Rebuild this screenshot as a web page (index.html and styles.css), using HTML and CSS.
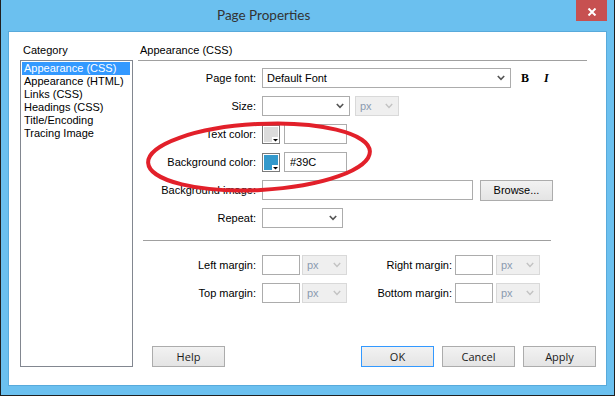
FILE: index.html
```html
<!DOCTYPE html>
<html lang="en">
<head>
  <meta charset="UTF-8">
  <meta name="viewport" content="width=device-width, initial-scale=1.0">
  <title>Page Properties</title>
  <link rel="stylesheet" href="styles.css">
</head>
<body>
  <div class="window">
    <div class="titlebar">
      <span class="title">Page Properties</span>
      <button class="close" type="button">
        <svg width="10" height="8" viewBox="0 0 10 8"><path d="M1.5 0.5 L8.5 7.5 M8.5 0.5 L1.5 7.5" stroke="#fff" stroke-width="2"/></svg>
      </button>
    </div>

    <div class="client">
      <div class="category">
        <div class="cat-label">Category</div>
        <ul class="cat-list">
          <li class="selected">Appearance (CSS)</li>
          <li>Appearance (HTML)</li>
          <li>Links (CSS)</li>
          <li>Headings (CSS)</li>
          <li>Title/Encoding</li>
          <li>Tracing Image</li>
        </ul>
      </div>

      <div class="panel">
        <div class="panel-title">Appearance (CSS)</div>

        <div class="form">
          <div class="row">
            <label class="lbl">Page font:</label>
            <div class="select font-select">
              <span>Default Font</span>
              <svg class="chev" width="8" height="6" viewBox="0 0 8 6"><path d="M0.8 1 L4 4.4 L7.2 1" fill="none" stroke="#555" stroke-width="1.6"/></svg>
            </div>
            <span class="style-btn bold">B</span>
            <span class="style-btn italic">I</span>
          </div>

          <div class="row">
            <label class="lbl">Size:</label>
            <div class="select size-select">
              <span></span>
              <svg class="chev" width="8" height="6" viewBox="0 0 8 6"><path d="M0.8 1 L4 4.4 L7.2 1" fill="none" stroke="#555" stroke-width="1.6"/></svg>
            </div>
            <div class="select unit disabled">
              <span>px</span>
              <svg class="chev" width="8" height="6" viewBox="0 0 8 6"><path d="M0.8 1 L4 4.4 L7.2 1" fill="none" stroke="#c2c2c2" stroke-width="1.4"/></svg>
            </div>
          </div>

          <div class="row">
            <label class="lbl">Text color:</label>
            <svg class="swatch" width="18" height="19" viewBox="0 0 18 19">
              <rect x="0.5" y="0.5" width="17" height="18" fill="#fff" stroke="#7a7a7a"/>
              <rect x="2" y="2" width="14" height="15" fill="#dcdcdc"/>
              <rect x="10" y="12" width="7" height="6" fill="#fff"/>
              <path d="M11 14 H16 L13.5 16.5 Z" fill="#000"/>
            </svg>
            <input class="field color-field" type="text" value="">
          </div>

          <div class="row">
            <label class="lbl">Background color:</label>
            <svg class="swatch" width="18" height="19" viewBox="0 0 18 19">
              <rect x="0.5" y="0.5" width="17" height="18" fill="#fff" stroke="#7a7a7a"/>
              <rect x="2" y="2" width="14" height="15" fill="#3399cc"/>
              <rect x="10" y="12" width="7" height="6" fill="#fff"/>
              <path d="M11 14 H16 L13.5 16.5 Z" fill="#000"/>
            </svg>
            <input class="field color-field" type="text" value="#39C">
          </div>

          <div class="row">
            <label class="lbl">Background image:</label>
            <input class="field image-field" type="text" value="">
            <button class="btn browse" type="button">Browse...</button>
          </div>

          <div class="row">
            <label class="lbl">Repeat:</label>
            <div class="select repeat-select">
              <span></span>
              <svg class="chev" width="8" height="6" viewBox="0 0 8 6"><path d="M0.8 1 L4 4.4 L7.2 1" fill="none" stroke="#555" stroke-width="1.6"/></svg>
            </div>
          </div>
        </div>

        <div class="sep"></div>

        <div class="margins">
          <div class="row">
            <label class="lbl">Left margin:</label>
            <input class="field margin-field" type="text" value="">
            <div class="select munit disabled">
              <span>px</span>
              <svg class="chev" width="8" height="6" viewBox="0 0 8 6"><path d="M0.8 1 L4 4.4 L7.2 1" fill="none" stroke="#c2c2c2" stroke-width="1.4"/></svg>
            </div>
            <label class="lbl right">Right margin:</label>
            <input class="field margin-field" type="text" value="">
            <div class="select munit disabled r">
              <span>px</span>
              <svg class="chev" width="8" height="6" viewBox="0 0 8 6"><path d="M0.8 1 L4 4.4 L7.2 1" fill="none" stroke="#c2c2c2" stroke-width="1.4"/></svg>
            </div>
          </div>
          <div class="row">
            <label class="lbl">Top margin:</label>
            <input class="field margin-field" type="text" value="">
            <div class="select munit disabled">
              <span>px</span>
              <svg class="chev" width="8" height="6" viewBox="0 0 8 6"><path d="M0.8 1 L4 4.4 L7.2 1" fill="none" stroke="#c2c2c2" stroke-width="1.4"/></svg>
            </div>
            <label class="lbl right">Bottom margin:</label>
            <input class="field margin-field" type="text" value="">
            <div class="select munit disabled r">
              <span>px</span>
              <svg class="chev" width="8" height="6" viewBox="0 0 8 6"><path d="M0.8 1 L4 4.4 L7.2 1" fill="none" stroke="#c2c2c2" stroke-width="1.4"/></svg>
            </div>
          </div>
        </div>

        <div class="buttons">
          <button class="btn dlg help" type="button">Help</button>
          <button class="btn dlg default" type="button">OK</button>
          <button class="btn dlg" type="button">Cancel</button>
          <button class="btn dlg" type="button">Apply</button>
        </div>
      </div>
    </div>

    <!-- red marker drawn over the dialog -->
    <svg class="annotation" width="615" height="396" viewBox="0 0 615 396">
      <ellipse cx="259" cy="157" rx="111" ry="33" transform="rotate(-3 259 157)" fill="none" stroke="#e2202a" stroke-width="4"/>
    </svg>
  </div>
</body>
</html>
```

FILE: styles.css
```css
* {
  box-sizing: border-box;
}
body {
  margin: 0;
  font-family: "Liberation Sans", Arial, sans-serif;
  font-size: 11px;
  color: #000;
  background: #fff;
}
.window {
  position: relative;
  width: 615px;
  height: 396px;
  background: #6bc0ef;
  border: 1px solid #1f1f1f;
  border-top: none;
  display: flex;
  flex-direction: column;
}
.titlebar {
  height: 31px;
  flex-shrink: 0;
  display: flex;
  align-items: flex-start;
}
.title {
  margin-left: 216px;
  line-height: 31px;
  font-family: Lato, "Liberation Sans", sans-serif;
  font-size: 13.5px;
  color: #333;
}
.close {
  margin-left: auto;
  margin-right: 7px;
  width: 31px;
  height: 21px;
  padding: 2px 0 0;
  border: none;
  background: #c75050;
  display: flex;
  align-items: center;
  justify-content: center;
}
.client {
  flex: 1;
  margin: 0 7px 9px 7px;
  background: #fff;
  border: 1px solid #58aadb;
  padding: 9px 10px 18px 11px;
  display: grid;
  grid-template-columns: 113px 1fr;
  column-gap: 5px;
}
.category {
  display: flex;
  flex-direction: column;
}
.cat-label {
  line-height: 19px;
  padding-left: 3px;
}
.cat-list {
  flex: 1;
  list-style: none;
  margin: 0;
  padding: 1px 2px 1px 1px;
  border: 1px solid #828790;
}
.cat-list li {
  line-height: 13px;
  padding-left: 2px;
}
.cat-list .selected {
  background: #3399ff;
  color: #fff;
}
.panel {
  display: flex;
  flex-direction: column;
}
.panel-title {
  line-height: 19px;
  padding-left: 2px;
  margin-right: 9px;
  border-bottom: 1px solid #a0a0a0;
}
.form {
  margin-top: 7px;
  display: flex;
  flex-direction: column;
  gap: 8px;
}
.row {
  display: flex;
  align-items: center;
  height: 20px;
}
.lbl {
  width: 118px;
  margin-right: 6px;
  text-align: right;
  white-space: nowrap;
}
.select {
  height: 20px;
  border: 1px solid #acacac;
  background: #fff;
  display: flex;
  align-items: center;
  justify-content: space-between;
  padding: 0 5px 0 4px;
}
.select.disabled {
  background: #efefef;
  border-color: #d9d9d9;
  color: #8b9bb0;
}
.font-select {
  width: 249px;
}
.size-select {
  width: 88px;
}
.unit {
  width: 44px;
  margin-left: 5px;
}
.repeat-select {
  width: 81px;
}
.style-btn {
  font-family: "Liberation Serif", serif;
  font-weight: bold;
  font-size: 12px;
}
.bold {
  margin-left: 10px;
}
.italic {
  margin-left: 15px;
  font-style: italic;
}
.swatch {
  display: block;
  margin-right: 4px;
}
.field {
  height: 20px;
  border: 1px solid #acacac;
  padding: 0 5px;
  font: inherit;
  color: #000;
  outline: none;
}
.color-field {
  width: 63px;
}
.image-field {
  width: 211px;
}
.btn {
  height: 21px;
  width: 73px;
  border: 1px solid #acacac;
  background: linear-gradient(#f2f2f2, #e4e4e4);
  padding: 0;
  color: #000;
  font-family: "Liberation Sans", Arial, sans-serif;
  font-size: 11px;
}
.browse {
  margin-left: 7px;
}
.sep {
  height: 1px;
  background: #a0a0a0;
  margin: 12px 45px 0 5px;
}
.margins {
  margin-top: 14px;
  display: flex;
  flex-direction: column;
  gap: 8px;
}
.margin-field {
  width: 38px;
}
.munit {
  width: 45px;
  margin-left: 2px;
}
.munit.r {
  width: 44px;
  margin-left: 3px;
}
.lbl.right {
  width: 105px;
  margin-right: 3px;
}
.buttons {
  margin-top: auto;
  display: flex;
  gap: 8px;
}
.btn.dlg {
  font-family: "Open Sans", "Liberation Sans", sans-serif;
  font-size: 11px;
  font-weight: 400;
  line-height: 19px;
  color: #1a1a1a;
}
.help {
  margin-left: 14px;
  margin-right: auto;
}
.default {
  border-color: #3399ff;
}
.annotation {
  position: absolute;
  top: 0;
  left: -1px;
  pointer-events: none;
}
```
